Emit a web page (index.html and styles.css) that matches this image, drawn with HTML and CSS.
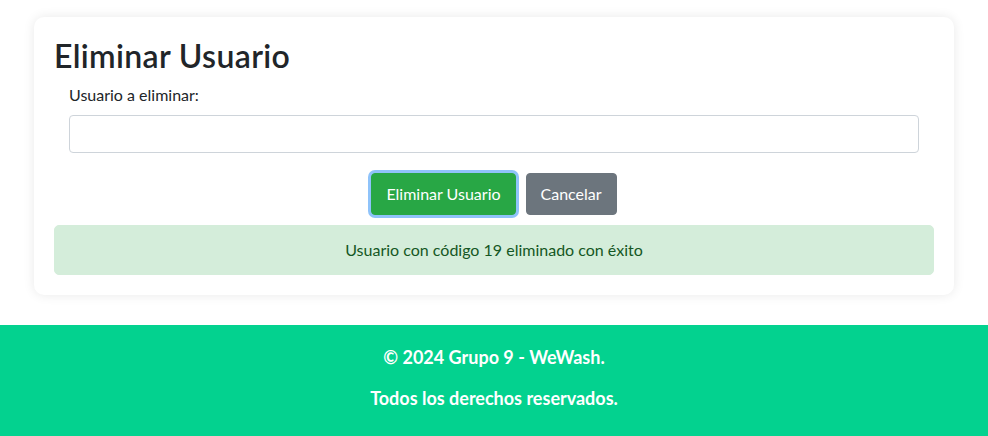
FILE: index.html
```html
<!DOCTYPE html>
<html lang="es">
<head>
<meta charset="utf-8">
<title>Eliminar Usuario</title>
<link rel="stylesheet" href="styles.css">
</head>
<body>
<main class="page">
  <section class="card">
    <h2 class="title">Eliminar Usuario</h2>
    <form class="form">
      <label class="label" for="usuario">Usuario a eliminar:</label>
      <input class="input" id="usuario" type="text">
      <div class="actions">
        <button type="button" class="btn btn-success is-focused">Eliminar Usuario</button>
        <button type="button" class="btn btn-secondary">Cancelar</button>
      </div>
    </form>
    <div class="alert">Usuario con código 19 eliminado con éxito</div>
  </section>
</main>
<footer class="footer">
  <p>© 2024 Grupo 9 - WeWash.</p>
  <p>Todos los derechos reservados.</p>
</footer>
</body>
</html>
```

FILE: styles.css
```css
* { box-sizing: border-box; }
html, body { margin: 0; }
body {
  font-family: Lato, "Open Sans", "Liberation Sans", sans-serif;
  font-size: 16px;
  line-height: 24px;
  color: #212529;
  background: #ffffff;
}
.page {
  padding: 17px 34px 30px 34px;
}
.card {
  background: #fff;
  border-radius: 10px;
  box-shadow: 0 0 12px rgba(0, 0, 0, 0.09);
  padding: 20px;
}
.title {
  margin: 0 0 8px 0;
  font-size: 32px;
  line-height: 38px;
  font-weight: 600;
  letter-spacing: 0.35px;
  color: #212529;
}
.form {
  padding: 0 15px;
}
.label {
  display: block;
  margin-bottom: 8px;
}
.input {
  display: block;
  width: 100%;
  height: 38px;
  border: 1px solid #ced4da;
  border-radius: 4px;
  background: #fff;
  font: inherit;
  padding: 6px 12px;
}
.actions {
  display: flex;
  justify-content: center;
  gap: 10px;
  margin-top: 20px;
}
.btn {
  font: inherit;
  font-size: 16px;
  line-height: 24px;
  padding: 8px 14px;
  border: 1px solid transparent;
  border-radius: 4px;
  color: #fff;
  height: 42px;
}
.btn-success {
  background: #28a745;
  border-color: #28a745;
}
.btn-secondary {
  background: #6c757d;
  border-color: #6c757d;
}
.is-focused {
  box-shadow: 0 0 0 3px #8fc3fa;
}
.alert {
  margin-top: 10px;
  background: #d4edda;
  border: 1px solid #d4edda;
  color: #155724;
  border-radius: 5px;
  padding: 12px 20px;
  text-align: center;
}
.footer {
  background: #03d28f;
  color: #fff;
  font-weight: 700;
  font-size: 18px;
  text-align: center;
  padding: 20px 0 10px;
}
.footer p {
  margin: 0 0 17px 0;
}
```
